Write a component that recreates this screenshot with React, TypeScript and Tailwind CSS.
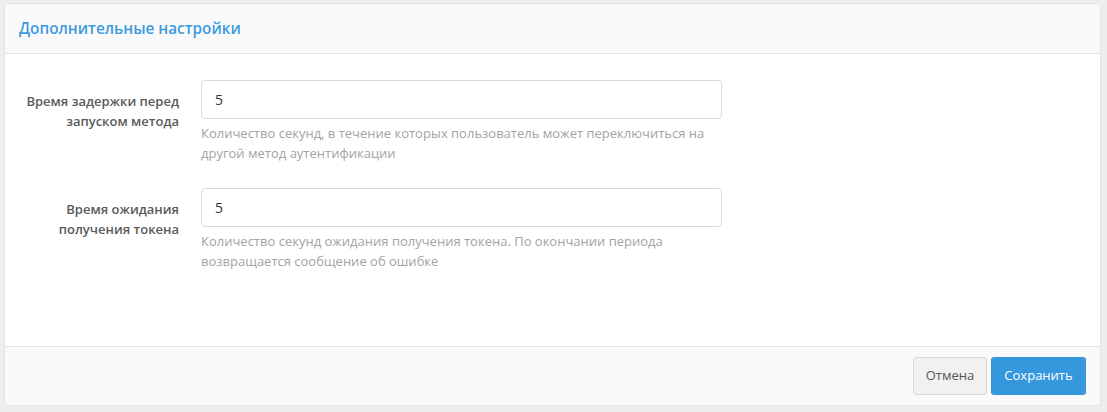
import React from 'react';

interface FieldProps {
  label: string[];
  value: string;
  help: string[];
}

const Field: React.FC<FieldProps> = ({ label, value, help }) => (
  <div className="flex">
    <label className="w-[174px] shrink-0 pt-[11px] text-right text-[13px] font-semibold leading-[20px] text-[#5a5a5a]">
      {label.map((l) => (
        <span key={l} className="block">
          {l}
        </span>
      ))}
    </label>
    <div className="ml-[22px] w-[521px]">
      <input
        readOnly
        value={value}
        className="h-[39px] w-full rounded-[4px] border border-[#d9d9d9] bg-white px-[13px] text-[14px] text-[#333] outline-none"
      />
      <p className="mt-[4px] text-[13px] leading-[20px] text-[#a3a3a3]">
        {help.map((h) => (
          <span key={h} className="block">
            {h}
          </span>
        ))}
      </p>
    </div>
  </div>
);

export default function App() {
  return (
    <div className="min-h-[412px] bg-[#eeeeee] pl-[4px] pr-[6px] pt-[3px] font-['Open_Sans',sans-serif]">
      <div className="overflow-hidden rounded-[4px] border border-[#e3e3e3] bg-white">
        <div className="flex h-[50px] items-center border-b border-[#e3e3e3] bg-[#fafafa] px-[14px]">
          <h2 className="text-[15.3px] font-semibold text-[#3d9ae0]">Дополнительные настройки</h2>
        </div>
        <div className="flex h-[292px] flex-col gap-[25px] pt-[26px]">
          <Field
            label={['Время задержки перед', 'запуском метода']}
            value="5"
            help={[
              'Количество секунд, в течение которых пользователь может переключиться на',
              'другой метод аутентификации',
            ]}
          />
          <Field
            label={['Время ожидания', 'получения токена']}
            value="5"
            help={[
              'Количество секунд ожидания получения токена. По окончании периода',
              'возвращается сообщение об ошибке',
            ]}
          />
        </div>
        <div className="flex h-[59px] items-center justify-end gap-[4px] border-t border-[#e3e3e3] bg-[#fafafa] pr-[14px]">
          <button className="h-[38px] w-[74px] rounded-[3px] border border-[#d6d6d6] bg-[#f1f1f1] text-[13px] text-[#555]">
            Отмена
          </button>
          <button className="h-[38px] w-[95px] rounded-[3px] bg-[#3598dc] text-[13px] text-white">
            Сохранить
          </button>
        </div>
      </div>
    </div>
  );
}
